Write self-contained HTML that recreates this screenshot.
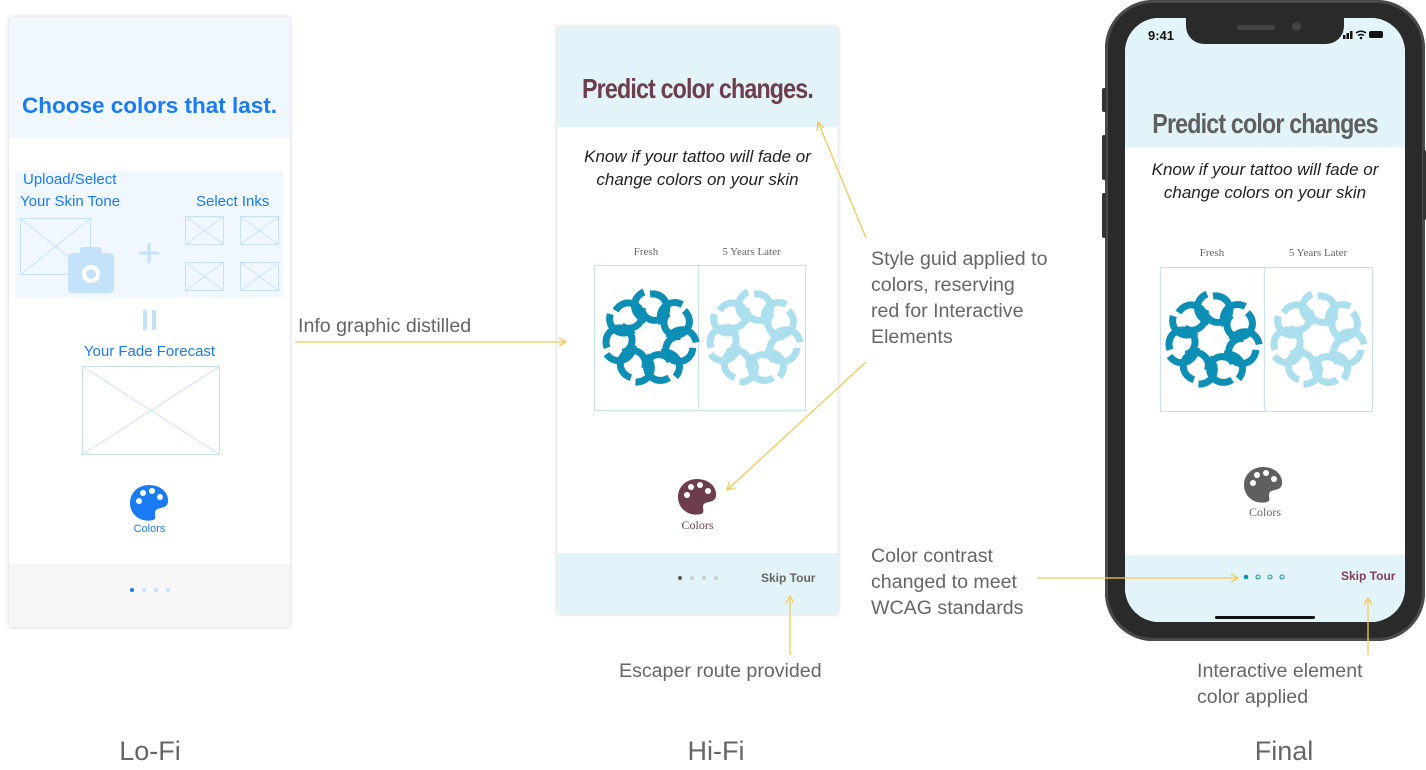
<!DOCTYPE html>
<html><head><meta charset="utf-8"><style>
*{margin:0;padding:0;box-sizing:border-box}
body{width:1426px;height:770px;background:#fff;position:relative;overflow:hidden;font-family:"Liberation Sans",sans-serif}
.a{position:absolute}
.ann{position:absolute;color:#666;font-size:19.6px;line-height:26px}
.lab{position:absolute;color:#666;font-size:27px;top:736px;width:200px;text-align:center}
.xbox{position:absolute;border:1px solid #c8e1fb}
.ser{font-family:"Liberation Serif",serif}
</style></head><body>
<svg width="0" height="0" style="position:absolute">
<defs>
<g id="knot" fill="none" stroke-width="7">
<g id="lp"><path d="M0,-44 C16,-46 22,-28 12,-20 C4,-14 -8,-20 -8,-30" /><path d="M-6,-46 C-20,-40 -18,-22 -4,-18"/></g>
<use href="#lp" transform="rotate(51.43)"/><use href="#lp" transform="rotate(102.86)"/><use href="#lp" transform="rotate(154.29)"/><use href="#lp" transform="rotate(205.71)"/><use href="#lp" transform="rotate(257.14)"/><use href="#lp" transform="rotate(308.57)"/>
</g>
<g id="pal"><path d="M0,-18 C12,-18 20,-10 19,-1 C18,6 10,4 7,7 C4,11 9,15 4,17 C-8,20 -19,12 -19,0 C-19,-11 -10,-18 0,-18Z"/>
<circle cx="-10" cy="-2" r="3" fill="#fff"/><circle cx="-6" cy="-10" r="3" fill="#fff"/><circle cx="3" cy="-12" r="3" fill="#fff"/><circle cx="11" cy="-6" r="3" fill="#fff"/></g>
</defs></svg>

<!-- Lo-Fi -->
<div class="a" style="left:9px;top:17px;width:281px;height:610px;background:#fff;box-shadow:0 0 4px rgba(0,0,0,.2)">
 <div class="a" style="left:0;top:0;width:281px;height:121px;background:#f0f7fe"></div>
 <div class="a" style="left:0;top:76px;width:281px;text-align:center;color:#1a7cf5;font-weight:bold;font-size:22.5px">Choose colors that last.</div>
 <div class="a" style="left:6px;top:154px;width:268px;height:127px;background:#f0f7fe"></div>
 <div class="a" style="left:14px;top:154px;color:#1a7cf5;font-size:15px">Upload/Select</div>
 <div class="a" style="left:11px;top:176px;color:#1a7cf5;font-size:15px">Your Skin Tone</div>
 <div class="a" style="left:187px;top:176px;color:#1a7cf5;font-size:15px">Select Inks</div>
 <svg class="a" style="left:0;top:0" width="281" height="610" fill="none" stroke="#c8e1fb" stroke-width="1">
  <rect x="11.5" y="201.5" width="70" height="56"/><path d="M11.5,201.5L81.5,257.5M81.5,201.5L11.5,257.5"/>
  <g><rect x="176.5" y="199.5" width="38" height="28"/><path d="M176.5,199.5l38,28m0,-28l-38,28"/></g>
  <g><rect x="231.5" y="199.5" width="38" height="28"/><path d="M231.5,199.5l38,28m0,-28l-38,28"/></g>
  <g><rect x="176.5" y="245.5" width="38" height="28"/><path d="M176.5,245.5l38,28m0,-28l-38,28"/></g>
  <g><rect x="231.5" y="245.5" width="38" height="28"/><path d="M231.5,245.5l38,28m0,-28l-38,28"/></g>
  <rect x="73.5" y="349.5" width="137" height="88"/><path d="M73.5,349.5L210.5,437.5M210.5,349.5L73.5,437.5"/>
  <path d="M140,226v20M130,236h20" stroke="#c5e2fb" stroke-width="3"/>
  <path d="M136,293v20M145,293v20" stroke="#c5e2fb" stroke-width="4"/>
  <rect x="59" y="236" width="46" height="40" rx="4" fill="#c5e2fb" stroke="none"/><rect x="71" y="230" width="22" height="10" rx="3" fill="#c5e2fb" stroke="none"/>
  <circle cx="82" cy="257" r="9" fill="#fff" stroke="none"/><circle cx="82" cy="257" r="5" fill="#c5e2fb" stroke="none"/>
  <g transform="translate(140,486)" fill="#1a7cf5" stroke="none"><use href="#pal"/></g>
 </svg>
 <div class="a" style="left:0;top:326px;width:281px;text-align:center;color:#1a7cf5;font-size:15px">Your Fade Forecast</div>
 <div class="a" style="left:0;top:506px;width:281px;text-align:center;color:#1a7cf5;font-size:11px">Colors</div>
 <div class="a" style="left:0;top:547px;width:281px;height:63px;background:#f6f6f6"></div>
 <svg class="a" style="left:0;top:547px" width="281" height="63"><circle cx="123" cy="26" r="2" fill="#1a7cf5"/><circle cx="135" cy="26" r="2" fill="#c5e2fb"/><circle cx="147" cy="26" r="2" fill="#c5e2fb"/><circle cx="159" cy="26" r="2" fill="#c5e2fb"/></svg>
</div>

<!-- Hi-Fi -->
<div class="a" style="left:557px;top:27px;width:281px;height:587px;background:#fff;box-shadow:0 0 4px rgba(0,0,0,.2)">
 <div class="a" style="left:0;top:0;width:281px;height:100px;background:#e2f4fa"></div>
 <div class="a" style="left:0;top:46px;width:281px;text-align:center;color:#6e3d4c;font-weight:bold;font-size:28px;letter-spacing:-1px;transform:scaleX(.83)">Predict color changes.</div>
 <div class="a" style="left:-10px;top:118px;width:301px;text-align:center;color:#222;font-style:italic;font-size:17px;line-height:23px">Know if your tattoo will fade or<br>change colors on your skin</div>
 <div class="a ser" style="left:37px;top:219px;width:104px;text-align:center;color:#666;font-size:11px">Fresh</div>
 <div class="a ser" style="left:141px;top:219px;width:107px;text-align:center;color:#666;font-size:11px">5 Years Later</div>
 <div class="xbox" style="left:37px;top:238px;width:212px;height:146px"></div>
 <div class="a" style="left:141px;top:238px;width:1px;height:146px;background:#c8e1fb"></div>
 <div class="a" style="left:0;top:526px;width:281px;height:61px;background:#e2f4fa"></div>
 <svg class="a" style="left:0;top:0" width="281" height="587">
  <g transform="translate(93,311)" stroke="#0d8fb5"><use href="#knot"/></g>
  <g transform="translate(197,311)" stroke="#acdfee"><use href="#knot"/></g>
  <g transform="translate(140,470)" fill="#6e3d4c"><use href="#pal"/></g>
  <circle cx="123" cy="551" r="2" fill="#555"/><circle cx="135" cy="551" r="2" fill="#ccc"/><circle cx="147" cy="551" r="2" fill="#ccc"/><circle cx="159" cy="551" r="2" fill="#ccc"/>
 </svg>
 <div class="a ser" style="left:0;top:491px;width:281px;text-align:center;color:#6e3d4c;font-size:12px">Colors</div>
 <div class="a" style="left:204px;top:544px;color:#666;font-weight:bold;font-size:12px">Skip Tour</div>
</div>

<!-- Final phone -->
<div class="a" style="left:1105px;top:0;width:320px;height:641px;border-radius:48px;background:#2a2a2a;box-shadow:inset 0 0 0 3px #4a4a4a"></div>
<div class="a" style="left:1102px;top:88px;width:4px;height:24px;background:#333;border-radius:2px"></div>
<div class="a" style="left:1102px;top:135px;width:4px;height:45px;background:#333;border-radius:2px"></div>
<div class="a" style="left:1102px;top:193px;width:4px;height:45px;background:#333;border-radius:2px"></div>
<div class="a" style="left:1423px;top:150px;width:3px;height:70px;background:#333;border-radius:2px"></div>
<div class="a" style="left:1125px;top:18px;width:280px;height:604px;border-radius:34px;background:#fff;overflow:hidden">
 <div class="a" style="left:0;top:0;width:280px;height:129px;background:#e2f4fa"></div>
 <div class="a" style="left:61px;top:0;width:158px;height:26px;background:#2a2a2a;border-radius:0 0 18px 18px"></div>
 <div class="a" style="left:112px;top:7px;width:38px;height:5px;background:#444;border-radius:3px"></div>
 <div class="a" style="left:167px;top:4px;width:9px;height:9px;background:#444;border-radius:50%"></div>
 <div class="a" style="left:23px;top:10px;font-weight:bold;font-size:13px;color:#111">9:41</div>
 <svg class="a" style="left:216px;top:10px" width="44" height="12"><rect x="2" y="7" width="2.5" height="4" fill="#111"/><rect x="5.5" y="5" width="2.5" height="6" fill="#111"/><rect x="9" y="3" width="2.5" height="8" fill="#111"/><path d="M15,5a8,8 0 0 1 10,0M17,7.5a5,5 0 0 1 6,0" stroke="#111" stroke-width="1.6" fill="none"/><circle cx="20" cy="10" r="1.3" fill="#111"/><rect x="28" y="3" width="14" height="7" rx="2" fill="#111"/></svg>
 <div class="a" style="left:0;top:90px;width:280px;text-align:center;color:#5f5f5f;font-weight:bold;font-size:28px;letter-spacing:-1px;transform:scaleX(.83)">Predict color changes</div>
 <div class="a" style="left:-10px;top:140px;width:300px;text-align:center;color:#222;font-style:italic;font-size:17px;line-height:23px">Know if your tattoo will fade or<br>change colors on your skin</div>
 <div class="a ser" style="left:35px;top:229px;width:104px;text-align:center;color:#666;font-size:11px">Fresh</div>
 <div class="a ser" style="left:139px;top:229px;width:108px;text-align:center;color:#666;font-size:11px">5 Years Later</div>
 <div class="xbox" style="left:35px;top:249px;width:213px;height:145px"></div>
 <div class="a" style="left:139px;top:249px;width:1px;height:145px;background:#c8e1fb"></div>
 <svg class="a" style="left:0;top:0" width="280" height="604">
  <g transform="translate(88,322)" stroke="#0d8fb5"><use href="#knot"/></g>
  <g transform="translate(193,322)" stroke="#acdfee"><use href="#knot"/></g>
  <g transform="translate(138,467)" fill="#5f5f5f"><use href="#pal"/></g>
 </svg>
 <div class="a ser" style="left:0;top:487px;width:280px;text-align:center;color:#666;font-size:12px">Colors</div>
 <div class="a" style="left:0;top:537px;width:280px;height:67px;background:#e2f4fa"></div>
 <svg class="a" style="left:0;top:537px" width="280" height="67"><circle cx="121" cy="22" r="2.3" fill="#0d8fb5"/><circle cx="133" cy="22" r="2" fill="none" stroke="#0d8fb5"/><circle cx="145" cy="22" r="2" fill="none" stroke="#0d8fb5"/><circle cx="157" cy="22" r="2" fill="none" stroke="#0d8fb5"/><rect x="90" y="61" width="100" height="3" rx="1.5" fill="#111"/></svg>
 <div class="a" style="left:216px;top:551px;color:#8a3a55;font-weight:bold;font-size:12px">Skip Tour</div>
</div>

<!-- arrows -->
<svg class="a" style="left:0;top:0" width="1426" height="770" fill="none" stroke="#f5c95a" stroke-width="1.3">
 <path d="M295,342H566M559,338l7,4l-7,4"/>
 <path d="M866,238L818,122M817,131l1,-9l6,6"/>
 <path d="M866,362L727,490M729,482l-2,8l8,-2"/>
 <path d="M1037,578H1238M1231,574l7,4l-7,4"/>
 <path d="M790,655V596M786,603l4,-7l4,7"/>
 <path d="M1368,655V598M1364,605l4,-7l4,7"/>
</svg>

<div class="ann" style="left:298px;top:313px">Info graphic distilled</div>
<div class="ann" style="left:871px;top:246px">Style guid applied to<br>colors, reserving<br>red for Interactive<br>Elements</div>
<div class="ann" style="left:871px;top:543px">Color contrast<br>changed to meet<br>WCAG standards</div>
<div class="ann" style="left:619px;top:658px">Escaper route provided</div>
<div class="ann" style="left:1197px;top:658px">Interactive element<br>color applied</div>

<div class="lab" style="left:50px">Lo-Fi</div>
<div class="lab" style="left:616px">Hi-Fi</div>
<div class="lab" style="left:1184px">Final</div>
</body></html>
